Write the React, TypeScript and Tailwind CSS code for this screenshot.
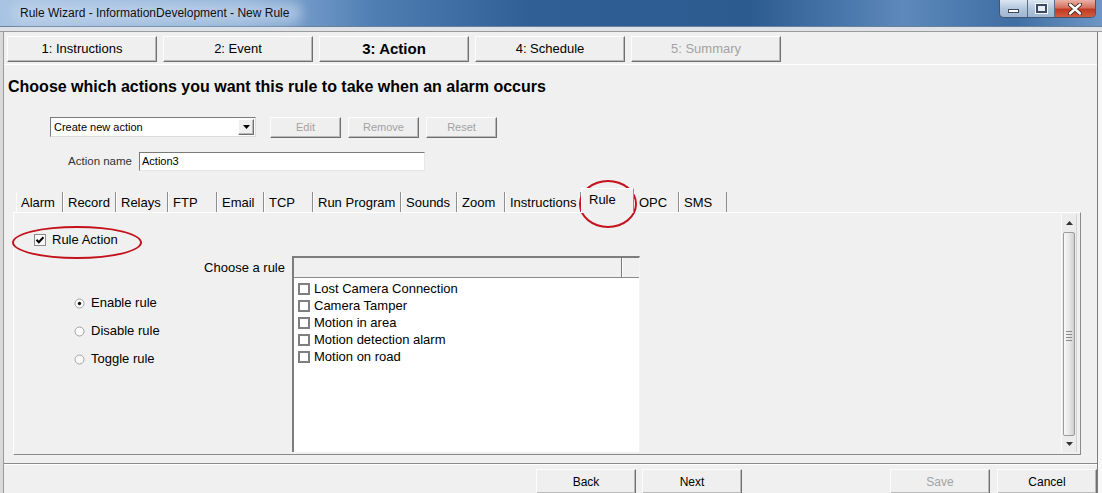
import React from 'react';

const steps = [
  { label: '1: Instructions' },
  { label: '2: Event' },
  { label: '3: Action', active: true },
  { label: '4: Schedule' },
  { label: '5: Summary', disabled: true },
];

const tabs = [
  { label: 'Alarm', w: 'w-[47px]' },
  { label: 'Record', w: 'w-[53px]' },
  { label: 'Relays', w: 'w-[52px]' },
  { label: 'FTP', w: 'w-[49px]' },
  { label: 'Email', w: 'w-[47px]' },
  { label: 'TCP', w: 'w-[49px]' },
  { label: 'Run Program', w: 'w-[88px]' },
  { label: 'Sounds', w: 'w-[56px]' },
  { label: 'Zoom', w: 'w-[48px]' },
  { label: 'Instructions', w: 'w-[76px]' },
  { label: 'Rule', w: 'w-[53px]', active: true },
  { label: 'OPC', w: 'w-[45px]' },
  { label: 'SMS', w: 'w-[48px]' },
];

const rules = ['Lost Camera Connection', 'Camera Tamper', 'Motion in area', 'Motion detection alarm', 'Motion on road'];

const raised =
  'bg-[#efefef] border border-t-[#fdfdfd] border-l-[#fdfdfd] border-r-[#6f6f6f] border-b-[#6f6f6f] shadow-[inset_-1px_-1px_0_#b9b9b9]';

function WinButton({ children, className = '', disabled = false }: { children: React.ReactNode; className?: string; disabled?: boolean }) {
  return (
    <div className={`${raised} flex items-center justify-center ${disabled ? 'text-[#a3a3a3]' : 'text-black'} ${className}`}>
      {children}
    </div>
  );
}

function TitleBar() {
  return (
    <div className="relative h-[26px] shrink-0 bg-[linear-gradient(90deg,#a9c4e3_0%,#8eb0d8_22%,#4f7eb3_34%,#2f5f95_48%,#2c5b90_68%,#5d89bc_82%,#3f6ea3_92%,#6d96c6_100%)]">
      <div className="absolute left-[12px] top-[2px] h-[22px] w-[290px] rounded-full bg-[#c9dbef]/60 blur-[6px]" />
      <div className="relative h-full flex items-center pl-[20px] text-[12px] text-[#111]">
        Rule Wizard - InformationDevelopment - New Rule
      </div>
      <div className="absolute right-[6px] top-0 flex h-[18px] rounded-b-[5px] overflow-hidden border border-t-0 border-[#43566f]">
        <div className="w-[28px] flex items-center justify-center bg-[linear-gradient(180deg,#dbe6f2,#b2c6dc_50%,#9fb6d1)] border-r border-r-[#5a6d86]">
          <div className="w-[11px] h-[4px] mt-[5px] bg-white border border-[#3b4a5e]" />
        </div>
        <div className="w-[27px] flex items-center justify-center bg-[linear-gradient(180deg,#dbe6f2,#b2c6dc_50%,#9fb6d1)] border-r border-r-[#5a6d86]">
          <div className="w-[11px] h-[9px] border-[2px] border-[#3b4a5e] bg-[#e9eef5] shadow-[0_0_0_1px_#f3f6fa]" />
        </div>
        <div className="w-[40px] flex items-center justify-center bg-[linear-gradient(180deg,#eab2a5,#d5705d_45%,#c23a24_55%,#d45b3e)]">
          <svg width="14" height="12" viewBox="0 0 14 12">
            <path d="M2 1.5 L12 10.5 M12 1.5 L2 10.5" stroke="#3b2420" strokeWidth="4.2" strokeLinecap="round" />
            <path d="M2 1.5 L12 10.5 M12 1.5 L2 10.5" stroke="#ffffff" strokeWidth="2.4" strokeLinecap="round" />
          </svg>
        </div>
      </div>
    </div>
  );
}

function Radio({ checked }: { checked?: boolean }) {
  return (
    <svg width="11" height="11" viewBox="0 0 11 11" className="shrink-0">
      <circle cx="5.5" cy="5.5" r="4.5" fill="#fbfbfb" stroke="#a2a2a2" />
      {checked && <circle cx="5.5" cy="5.5" r="1.7" fill="#111" />}
    </svg>
  );
}

function Scrollbar() {
  return (
    <div className="w-[16px] h-[238px] mt-[1px] mr-[3px] flex flex-col bg-[#ececec] border-l border-l-[#fafafa] border-r border-r-[#d4d4d4]">
      <div className="h-[18px] flex items-center justify-center">
        <svg width="7" height="4" viewBox="0 0 7 4"><path d="M0 4 L3.5 0 L7 4 Z" fill="#333" /></svg>
      </div>
      <div className="flex-1 mx-[1px] rounded-[2px] border border-[#9c9c9c] bg-[linear-gradient(90deg,#f9f9f9,#e6e6e6_55%,#cfcfcf)] flex items-center justify-center">
        <div className="flex flex-col gap-[2px] mt-[4px]">
          <div className="w-[6px] h-[1px] bg-[#8a8a8a]" />
          <div className="w-[6px] h-[1px] bg-[#8a8a8a]" />
          <div className="w-[6px] h-[1px] bg-[#8a8a8a]" />
          <div className="w-[6px] h-[1px] bg-[#8a8a8a]" />
        </div>
      </div>
      <div className="h-[16px] flex items-center justify-center">
        <svg width="7" height="4" viewBox="0 0 7 4"><path d="M0 0 L3.5 4 L7 0 Z" fill="#333" /></svg>
      </div>
    </div>
  );
}

export default function App() {
  return (
    <div className="relative w-[1102px] h-[493px] overflow-hidden bg-[#f0f0f0] font-['Liberation_Sans',Arial,sans-serif] text-black flex flex-col">
      <TitleBar />
      <div className="h-[6px] shrink-0 bg-[#dfe3e8] border-t border-t-[#6a7f99] border-b border-b-[#9b9b9b]" />
      <div className="flex-1 flex flex-col border-l-[3px] border-l-[#d9d9d9] border-r-[4px] border-r-[#f7f7f7]">
        <div className="flex-1 flex flex-col border-l border-l-[#9a9a9a] border-r border-r-[#7c7c7c]">
          {/* wizard steps */}
          <div className="h-[32px] shrink-0 flex gap-[6px] pt-[4px] pl-[3px]">
            {steps.map((s) => (
              <WinButton
                key={s.label}
                disabled={s.disabled}
                className={`w-[150px] h-[26px] ${s.active ? 'text-[15px] font-bold' : 'text-[13px]'}`}
              >
                {s.label}
              </WinButton>
            ))}
          </div>

          <div className="flex-1 flex flex-col border-t border-t-white">
            <h1 className="ml-[4px] mt-[12px] h-[19px] text-[16px] leading-[19px] font-bold">
              Choose which actions you want this rule to take when an alarm occurs
            </h1>

            {/* action selector */}
            <div className="mt-[21px] h-[20px] flex items-center">
              <div className="ml-[46px] w-[206px] h-[20px] bg-white border border-t-[#7a7a7a] border-l-[#7a7a7a] border-r-[#dcdcdc] border-b-[#dcdcdc] flex items-center">
                <span className="flex-1 pl-[3px] text-[11px]">Create new action</span>
                <div className={`${raised} w-[16px] h-[16px] mr-[1px] flex items-center justify-center`}>
                  <svg width="7" height="4" viewBox="0 0 7 4"><path d="M0 0 L3.5 4 L7 0 Z" fill="#000" /></svg>
                </div>
              </div>
              <div className="ml-[14px] flex gap-[7px]">
                {['Edit', 'Remove', 'Reset'].map((b) => (
                  <WinButton key={b} disabled className="w-[71px] h-[21px] text-[11px]">
                    {b}
                  </WinButton>
                ))}
              </div>
            </div>

            <div className="mt-[15px] h-[19px] flex items-center">
              <span className="w-[128px] text-right text-[11.5px] text-[#333]">Action name</span>
              <div className="ml-[7px] w-[286px] h-[19px] bg-white border border-t-[#7a7a7a] border-l-[#7a7a7a] border-r-[#e6e6e6] border-b-[#e6e6e6] flex items-center pl-[2px] text-[11px]">
                Action3
              </div>
            </div>

            {/* tabs */}
            <div className="ml-[9px] mt-[21px] w-[1068px] flex flex-col">
              <div className="h-[20px] flex items-end pl-[3px]">
                {tabs.map((t) =>
                  t.active ? (
                    <div
                      key={t.label}
                      className={`${t.w} relative z-10 h-[25px] -mb-[1px] bg-[#f0f0f0] border-l border-l-white border-t border-t-white border-r border-r-[#8e8e8e] pl-[7px] pt-[2px] text-[13px] leading-[17px]`}
                    >
                      {t.label}
                    </div>
                  ) : (
                    <div
                      key={t.label}
                      className={`${t.w} h-[20px] border-l border-l-white border-r border-r-[#8e8e8e] pl-[4px] text-[13px] leading-[21px]`}
                    >
                      {t.label}
                    </div>
                  )
                )}
              </div>

              <div className="h-[243px] flex border-t border-t-white border-l border-l-white border-r border-r-[#8a8a8a] border-b border-b-[#8a8a8a]">
                <div className="w-[278px] flex flex-col">
                  <div className="mt-[20px] h-[14px] flex items-center pl-[20px]">
                    <svg width="12" height="12" viewBox="0 0 12 12" className="shrink-0">
                      <rect x="0.5" y="0.5" width="11" height="11" fill="#fafafa" stroke="#8a8a8a" />
                      <path d="M2.5 5.8 L4.8 8.2 L9.4 3.2" stroke="#000" strokeWidth="2" fill="none" />
                    </svg>
                    <span className="ml-[6px] text-[13px]">Rule Action</span>
                  </div>
                  <div className="mt-[13px] h-[15px] text-right pr-[7px] text-[13px] leading-[15px]">Choose a rule</div>
                  <div className="mt-[20px] flex flex-col gap-[12px] pl-[60px]">
                    {['Enable rule', 'Disable rule', 'Toggle rule'].map((r, i) => (
                      <div key={r} className="h-[16px] flex items-center">
                        <Radio checked={i === 0} />
                        <span className="ml-[6px] text-[13px]">{r}</span>
                      </div>
                    ))}
                  </div>
                </div>

                {/* rule list */}
                <div className="mt-[43px] w-[348px] h-[196px] flex flex-col bg-white border-l-2 border-l-[#7d7d7d] border-t-2 border-t-[#7d7d7d] border-r border-r-[#f4f4f4]">
                  <div className="h-[20px] shrink-0 flex bg-[#f0f0f0] border-b border-b-[#8a8a8a]">
                    <div className="w-[328px] border-r border-r-[#7a7a7a] shadow-[1px_0_0_#ffffff]" />
                    <div className="flex-1" />
                  </div>
                  <div className="pt-[2px] flex flex-col">
                    {rules.map((r) => (
                      <div key={r} className="h-[17px] flex items-center pl-[4px]">
                        <div className="w-[12px] h-[12px] border-2 border-[#7f7f7f] bg-white shrink-0" />
                        <span className="ml-[4px] text-[13px]">{r}</span>
                      </div>
                    ))}
                  </div>
                </div>

                <div className="flex-1" />
                <Scrollbar />
              </div>
            </div>

            {/* footer */}
            <div className="h-[8px] shrink-0" />
            <div className="border-t border-t-[#8a8a8a] border-b border-b-white" />
            <div className="flex pt-[4px] pl-[532px]">
              <WinButton className="w-[100px] h-[25px] text-[12px]">Back</WinButton>
              <WinButton className="ml-[6px] w-[100px] h-[25px] text-[12px]">Next</WinButton>
              <WinButton disabled className="ml-[148px] w-[100px] h-[25px] text-[12px]">Save</WinButton>
              <WinButton className="ml-[7px] w-[100px] h-[25px] text-[12px]">Cancel</WinButton>
            </div>
          </div>
        </div>
      </div>

      {/* red annotation marks */}
      <div className="absolute left-[12px] top-[226px] w-[130px] h-[33px] rounded-[50%] border-2 border-[#c3121c]" />
      <div className="absolute left-[579px] top-[180px] w-[58px] h-[48px] rounded-[50%] border-2 border-[#c3121c]" />
    </div>
  );
}
